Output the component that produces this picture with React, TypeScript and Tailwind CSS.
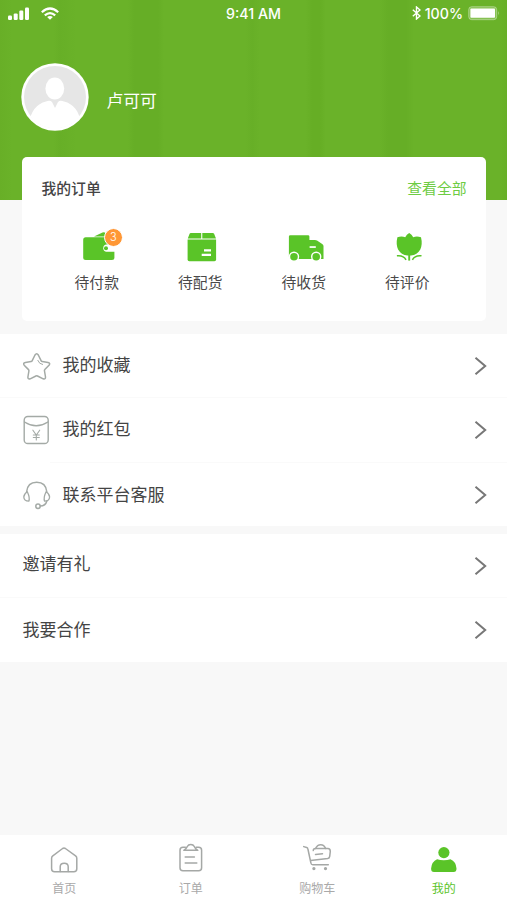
import type { ReactNode } from 'react';

const GREEN = '#5ac428';

function StatusBar() {
  return (
    <div className="flex h-7 items-center justify-between pl-2 pr-[7px] font-[Inter,sans-serif] text-[14px] font-medium text-white">
      <div className="flex w-[180px] items-center gap-[12px]">
        <svg className="-mt-px" width="22" height="14" viewBox="0 0 22 14" fill="#fff">
          <rect x="0" y="8.6" width="4" height="4.4" rx="1.2" />
          <rect x="5.7" y="6.4" width="4" height="6.6" rx="1.2" />
          <rect x="11.3" y="3.6" width="4" height="9.4" rx="1.2" />
          <rect x="17" y="0.6" width="4" height="12.4" rx="1.2" />
        </svg>
        <svg className="-ml-px -mt-px" width="18" height="14" viewBox="0 0 18 14" fill="none" stroke="#fff" strokeWidth="2.2">
          <path d="M0.8 5.2Q9 -2.2 17.2 5.2" />
          <path d="M3.8 8.4Q9 3.8 14.2 8.4" />
          <path d="M9 12.8L6.1 9.9Q9 7.9 11.9 9.9Z" fill="#fff" stroke="none" />
        </svg>
      </div>
      <span className="-ml-px whitespace-nowrap text-[14.2px]">9:41 AM</span>
      <div className="flex w-[180px] items-center justify-end">
        <svg className="-mt-px mr-1" width="9" height="14" viewBox="0 0 9 14" fill="none" stroke="#fff" strokeWidth="1.4">
          <path d="M0.8 3.7L8 10L4.5 13V1L8 4L0.8 10.3" />
        </svg>
        <span className="mr-[5px] text-[14.2px]">100%</span>
        <svg className="-mt-px" width="32" height="15" viewBox="0 0 32 15">
          <rect x="0.7" y="0.7" width="28" height="13" rx="3" fill="#fff" fillOpacity="0.2" stroke="#fff" strokeOpacity="0.35" strokeWidth="1" />
          <rect x="2.4" y="2.6" width="24.6" height="9.2" rx="0.8" fill="#fff" />
          <path d="M30 5Q31.6 7.2 30 9.4Z" fill="#fff" fillOpacity="0.5" />
        </svg>
      </div>
    </div>
  );
}

function Avatar() {
  return (
    <svg width="68" height="68" viewBox="0 0 68 68">
      <defs>
        <clipPath id="face">
          <circle cx="34" cy="34" r="31.5" />
        </clipPath>
      </defs>
      <circle cx="34" cy="34" r="33.7" fill="#fff" />
      <circle cx="34" cy="34" r="31" fill="#e6e6e6" />
      <g clipPath="url(#face)" fill="#fff">
        <ellipse cx="33.8" cy="25.5" rx="9.4" ry="11" />
        <path d="M8 60Q11 42 25 38.5Q29 37 31 39L34 45L37 39Q39 37 43 38.5Q57 42 60 60V68H8Z" />
      </g>
    </svg>
  );
}

const orders: { label: string; badge?: number; icon: ReactNode }[] = [
  {
    label: '待付款',
    badge: 3,
    icon: (
      <>
        <path d="M13 5.6L21.5 1.5Q25 0.5 26.5 5.6Z" />
        <rect x="2.2" y="6.3" width="31.2" height="22.8" rx="2.5" />
        <path d="M34 13.5H25A3.8 3.8 0 0 0 25 20.8H34Z" fill="#fff" />
        <circle cx="25" cy="17.2" r="2" />
      </>
    ),
  },
  {
    label: '待配货',
    icon: (
      <>
        <path d="M6.8 2H17.2V7.4H3.8L5.6 2.8Q6 2 6.8 2ZM18.3 2H28.8Q29.7 2 30.1 2.8L32 7.4H18.3Z" />
        <path d="M3.6 8.4H32.1V28.5Q32.1 30.2 30.4 30.2H5.3Q3.6 30.2 3.6 28.5Z" />
        <path d="M20 18.2H27V20.5H20ZM17.7 22.8H27V25H17.7Z" fill="#fff" />
      </>
    ),
  },
  {
    label: '待收货',
    icon: (
      <>
        <path d="M2.3 4.2H20Q21.4 4.2 21.4 5.6V9H27Q28 9 29 9.6L34.2 13Q35.5 14 35.5 15V28H0.9V5.6Q0.9 4.2 2.3 4.2Z" />
        <path d="M0 25.6H6V31H0Z" fill="#fff" />
        <g stroke="#fff" strokeWidth="1.4">
          <circle cx="6" cy="25.8" r="4.5" />
          <circle cx="28.2" cy="25.8" r="4.5" />
        </g>
        <rect x="21.6" y="15.2" width="6.2" height="1.7" fill="#fff" />
      </>
    ),
  },
  {
    label: '待评价',
    icon: (
      <>
        <path d="M18.2 2Q20.8 3.2 22.2 6.2Q25.7 4.7 30 6.2Q31.7 13 29.3 18.5Q26.2 23.8 20 24.6H16.4Q10.2 23.8 7.1 18.5Q4.7 13 6.4 6.2Q10.7 4.7 14.2 6.2Q15.6 3.2 18.2 2Z" />
        <path d="M18.2 23V29.6" stroke={GREEN} strokeWidth="1.9" />
        <path d="M5.9 24.8Q12.5 24 15 28.8M30.5 24.8Q23.9 24 21.4 28.8" fill="none" stroke={GREEN} strokeWidth="1.5" />
      </>
    ),
  },
];

function OrdersCard() {
  return (
    <section className="mx-[21.5px] -mt-[43px] h-[164px] rounded-[5px] bg-white">
      <div className="flex justify-between pl-5 pr-[19px] pt-5 text-[14.8px] leading-[22px]">
        <h2 className="font-medium text-[#444]">我的订单</h2>
        <a className="text-[#6dcc43]">查看全部</a>
      </div>
      <ul className="ml-[23.5px] mt-8 grid w-[414px] grid-cols-4">
        {orders.map((o) => (
          <li key={o.label} className="flex flex-col items-center">
            <div className="relative ml-1">
              <svg width="36" height="32" viewBox="0 0 36 32" fill={GREEN}>
                {o.icon}
              </svg>
              {o.badge && (
                <span className="absolute -top-[3px] left-[23px] flex h-[19px] w-[19px] items-center justify-center rounded-full border border-white bg-[#ff9735] font-[Inter,sans-serif] text-[11px] font-light text-white">
                  {o.badge}
                </span>
              )}
            </div>
            <span className="mt-[8px] text-[14.8px] leading-[22px] text-[#4a4a4a]">{o.label}</span>
          </li>
        ))}
      </ul>
    </section>
  );
}

function StarIcon() {
  return (
    <svg width="28" height="30" viewBox="0 0 28 30" fill="none" stroke="#a4aaa6" strokeWidth="1.5" strokeLinejoin="round" strokeLinecap="round">
      <path d="M12 3Q13.7 0.4 15.3 3L18.2 8.8Q18.5 9.4 19.3 9.5L25 10.4Q27.7 11 26 13.2L21.8 17.6Q21.3 18.1 21.5 19L22.5 25Q22.6 27.6 20.2 26.8L14.5 24Q13.7 23.6 12.9 24L7.2 26.8Q4.8 27.6 4.9 25L5.9 19Q6 18.1 5.5 17.6L1.2 13.2Q-0.3 11 2.4 10.4L8 9.5Q8.8 9.4 9.1 8.8Z" />
      <path d="M14.8 8.4Q16.2 12.2 19.6 12.5" strokeWidth="1" />
    </svg>
  );
}

function EnvelopeIcon() {
  return (
    <svg width="28" height="30" viewBox="0 0 28 30" fill="none" stroke="#a4aaa6" strokeWidth="1.4" strokeLinecap="round">
      <rect x="1.2" y="1.5" width="24" height="27" rx="3.6" />
      <path d="M1.5 7Q13.2 14.5 24.9 7" />
      <path d="M9.9 15.2L13.3 20L16.7 15.2M13.3 20V25M10.3 20H16.3M10.3 22.5H16.3" strokeWidth="1.1" />
    </svg>
  );
}

function HeadsetIcon() {
  return (
    <svg width="28" height="30" viewBox="0 0 28 30" fill="none" stroke="#a4aaa6" strokeWidth="1.5" strokeLinecap="round" strokeLinejoin="round">
      <path d="M3.6 11.8Q4.5 2.2 13.7 2.2Q22.9 2.2 23.8 11.8" />
      <path d="M4.3 11.8Q0.8 14 0.8 17Q1 21.2 5.8 21.2Q7.2 18 4.3 11.8ZM23.1 11.8Q26.6 14 26.6 17Q26.4 21.2 21.6 21.2Q20.2 18 23.1 11.8Z" strokeWidth="1.3" />
      <circle cx="15" cy="26.3" r="2.2" />
      <path d="M17.3 26Q22.5 25.8 23.8 21.2" />
    </svg>
  );
}

function Row({ label, icon, className }: { label: string; icon?: ReactNode; className: string }) {
  return (
    <li className={`flex items-center pl-[22.6px] pr-5 ${className}`}>
      {icon && <span className="mr-[12px] shrink-0">{icon}</span>}
      <span className="flex-1 text-[17px] leading-6 text-[#444]">{label}</span>
      <svg width="13" height="20" viewBox="0 0 13 20" fill="none" stroke="#777" strokeWidth="2">
        <path d="M1.5 1.8L11.2 10L1.5 18.2" />
      </svg>
    </li>
  );
}

function Tab({ label, active, children }: { label: string; active?: boolean; children: ReactNode }) {
  return (
    <a className={`flex flex-col items-center pt-[8px] text-[12px] leading-[18px] ${active ? 'text-[#5ac428]' : 'text-[#a9a9a9]'}`}>
      <svg width="32" height="32" viewBox="0 0 32 32" fill="none" stroke="#a5a8a6" strokeWidth="1.5" strokeLinecap="round" strokeLinejoin="round">
        {children}
      </svg>
      <span className="mt-[4px]">{label}</span>
    </a>
  );
}

export default function App() {
  return (
    <div className="flex h-[900px] w-[507px] flex-col overflow-hidden bg-[#f8f8f8] font-['Noto_Sans_CJK_SC',sans-serif]">
      <header className="h-[200px] shrink-0 bg-[linear-gradient(90deg,#68af27_0px,#6ab229_12px,#6ab229_54px,#67af27_60px,#6ab229_76px,#6ab229_128px,#66ae26_134px,#66ae26_158px,#6ab229_164px,#6ab229_246px,#67af27_252px,#6ab229_260px,#6ab229_306px,#66ae25_312px,#66ae25_320px,#6ab229_326px,#6ab229_380px,#66ae26_388px,#66ae26_406px,#6ab229_414px,#6ab229_500px,#67af27_507px)]">
        <StatusBar />
        <div className="flex items-center pl-[21px] pt-[35px]">
          <Avatar />
          <span className="ml-[17.5px] mt-[5px] text-[16.8px] leading-6 text-white">卢可可</span>
        </div>
      </header>
      <OrdersCard />
      <ul className="mt-[13px] bg-white">
        <Row label="我的收藏" icon={<StarIcon />} className="h-16 border-b border-[#fafafa] [&>span]:-mt-[4px] [&>span:first-child]:mt-[2px]" />
        <Row label="我的红包" icon={<EnvelopeIcon />} className="h-16 [&>span]:-mt-[4px] [&>span:first-child]:mt-0" />
        <li className="ml-[50px] h-px bg-[#fafafa]" />
        <Row label="联系平台客服" icon={<HeadsetIcon />} className="h-[63px] pt-px [&>span]:-mt-[2px] [&>span:first-child]:mt-0" />
      </ul>
      <ul className="mt-[8px] bg-white">
        <Row label="邀请有礼" className="h-16 border-b border-[#fafafa] [&>span]:-mt-[5px]" />
        <Row label="我要合作" className="h-16 [&>span]:-mt-[3px]" />
      </ul>
      <nav className="mt-auto grid h-[65px] shrink-0 grid-cols-4 bg-white pl-px">
        <Tab label="首页">
          <path d="M3.6 15.2Q3.6 13.8 4.8 12.8L14.6 5.5Q16 4.6 17.4 5.5L27.6 12.8Q28.8 13.8 28.8 15.2V25.8Q28.8 28.8 25.8 28.8H6.6Q3.6 28.8 3.6 25.8Z" />
          <path d="M12.2 28.6V23.8Q12.2 20.2 16.2 20.2Q20.2 20.2 20.2 23.8V28.6" />
        </Tab>
        <Tab label="订单">
          <path d="M10.4 4.2H8Q5 4.2 5 7.2V24.8Q5 27.8 8 27.8H23.6Q26.6 27.8 26.6 24.8V7.2Q26.6 4.2 23.6 4.2H21.2" />
          <path d="M8.8 7.3Q11.6 5.5 12.3 3.5Q13.3 1.5 15.8 1.5Q18.3 1.5 19.3 3.5Q20 5.5 22.8 7.3Z" />
          <path d="M10.2 14.1H19.4M10.2 20.1H21.8" />
        </Tab>
        <Tab label="购物车">
          <g transform="translate(-0.7 -1)">
            <path d="M3.4 4.6L6.4 5.5Q7.4 5.9 7.6 7L10.6 21Q10.9 22.8 12.5 22.8H28M10.2 18.6L27.4 16.6Q29.2 16.2 29.4 14.4L30 9.4Q30 6.8 27.6 6.6H15.2Q12.8 6.6 13 8.6" />
            <path d="M15.2 6.5Q17 2.7 20.4 2.7Q23.8 2.7 25.4 6.5M15.2 12.4L22.2 11.8" />
            <circle cx="13.6" cy="26.6" r="0.9" fill="#a5a8a6" />
            <circle cx="25.2" cy="26.6" r="0.9" fill="#a5a8a6" />
          </g>
        </Tab>
        <Tab label="我的" active>
          <g fill={GREEN} stroke="none" transform="translate(-0.4 -1)">
            <circle cx="16.3" cy="10.6" r="5.6" />
            <path d="M3.5 26.5Q4 19.5 9.5 17.2Q12.5 18.3 16.2 18.3Q19.9 18.3 22.9 17.2Q28.4 19.5 28.9 26.5Q29 30 26 30H6.4Q3.4 30 3.5 26.5Z" />
          </g>
        </Tab>
      </nav>
    </div>
  );
}
